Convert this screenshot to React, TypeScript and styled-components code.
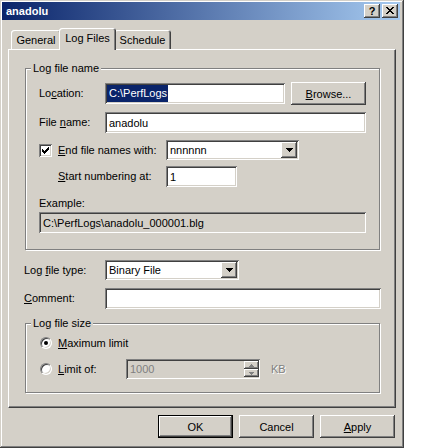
import React from 'react';
import styled, { createGlobalStyle, css } from 'styled-components';

const face = '#d4d0c8';

const GlobalStyle = createGlobalStyle`
  html, body {
    margin: 0;
    background: #fff;
  }
  body {
    font-family: "Liberation Sans", Arial, sans-serif;
    font-size: 11px;
    color: #000;
  }
`;

const raised = css`
  box-shadow: inset -1px -1px #404040, inset 1px 1px #fff, inset -2px -2px #808080, inset 2px 2px ${face};
`;

const sunken = css`
  box-shadow: inset 1px 1px #808080, inset -1px -1px #fff, inset 2px 2px #404040, inset -2px -2px ${face};
`;

const Window = styled.div`
  box-sizing: border-box;
  width: 404px;
  height: 448px;
  padding: 2px 4px 0 2px;
  background: ${face};
  box-shadow: inset -1px -1px #404040, inset 1px 1px ${face}, inset -2px -2px #808080, inset 2px 2px #fff;
`;

const TitleBar = styled.div`
  height: 18px;
  display: flex;
  align-items: center;
  padding: 0 2px 0 4px;
  background: linear-gradient(to right, #0a246a, #a6caf0);
`;

const Title = styled.span`
  flex: 1;
  color: #fff;
  font-weight: bold;
  font-size: 11px;
`;

const CaptionButton = styled.div<{ $gap?: number }>`
  box-sizing: border-box;
  width: 16px;
  height: 14px;
  margin-left: ${p => p.$gap ?? 0}px;
  background: ${face};
  ${raised};
  display: flex;
  align-items: center;
  justify-content: center;
  font-weight: bold;
  font-size: 11px;
  line-height: 14px;
  padding-bottom: 1px;
`;

const Body = styled.div`
  padding: 8px 4px 0 6px;
`;

const TabStrip = styled.div`
  display: flex;
  align-items: flex-end;
  height: 21px;
  padding-left: 3px;
`;

const Tab = styled.div<{ $active?: boolean; $w: number }>`
  position: relative;
  z-index: ${p => (p.$active ? 2 : 1)};
  box-sizing: border-box;
  width: ${p => p.$w}px;
  height: ${p => (p.$active ? 22 : 19)}px;
  margin: 0 ${p => (p.$active ? -2 : 0)}px ${p => (p.$active ? -1 : 0)}px;
  padding-bottom: ${p => (p.$active ? 2 : 0)}px;
  background: ${face};
  border-radius: 3px 3px 0 0;
  box-shadow: inset 1px 1px #fff, inset -1px 0 #404040, inset -2px 0 #808080;
  display: flex;
  align-items: center;
  justify-content: center;
`;

const Panel = styled.div`
  border: 1px solid;
  border-color: #fff #404040 #404040 #fff;
  box-shadow: inset -1px -1px #808080;
  padding: 18px 14px 14px 15px;
`;

const Group = styled.div<{ $mt?: number; $pb: number }>`
  margin: ${p => p.$mt ?? 0}px 1px 0;
  border: 1px solid #808080;
  box-shadow: 1px 1px #fff, inset 1px 1px #fff;
  padding: 0 13px ${p => p.$pb}px;
`;

const GroupTitle = styled.div`
  display: table;
  margin: -7px 0 0 -8px;
  padding: 0 2px;
  line-height: 13px;
  background: ${face};
`;

const Row = styled.div<{ $mt: number; $h: number; $indent?: number }>`
  display: flex;
  align-items: center;
  height: ${p => p.$h}px;
  margin-top: ${p => p.$mt}px;
  padding-left: ${p => p.$indent ?? 0}px;
`;

const Label = styled.span<{ $w?: number; $dim?: boolean; $ml?: number }>`
  flex: none;
  width: ${p => (p.$w ? `${p.$w}px` : 'auto')};
  margin-left: ${p => p.$ml ?? 0}px;
  white-space: nowrap;
  line-height: 13px;
  color: ${p => (p.$dim ? '#808080' : '#000')};
  text-shadow: ${p => (p.$dim ? '1px 1px #fff' : 'none')};
`;

const Key = styled.span`
  text-decoration: underline;
`;

const Edit = styled.div<{ $w?: number; $h?: number; $grey?: boolean }>`
  box-sizing: border-box;
  ${p => (p.$w ? `width: ${p.$w}px; flex: none;` : 'flex: 1;')}
  height: ${p => p.$h ?? 21}px;
  padding: 2px 2px 2px 4px;
  background: ${p => (p.$grey ? face : '#fff')};
  ${sunken};
  display: flex;
  align-items: center;
  white-space: nowrap;
  overflow: hidden;
`;

const EditText = styled.span<{ $dim?: boolean }>`
  flex: 1;
  color: ${p => (p.$dim ? '#808080' : '#000')};
`;

const Selected = styled.span`
  margin-left: -2px;
  padding: 0 1px 0 2px;
  line-height: 17px;
  background: #0a246a;
  color: #fff;
`;

const Combo = styled.div<{ $w: number }>`
  box-sizing: border-box;
  width: ${p => p.$w}px;
  height: 20px;
  padding: 2px;
  background: #fff;
  ${sunken};
  display: flex;
  align-items: center;
`;

const ComboText = styled.span`
  flex: 1;
  padding-left: 2px;
`;

const DropButton = styled.div`
  box-sizing: border-box;
  width: 16px;
  height: 16px;
  background: ${face};
  ${raised};
  display: flex;
  align-items: center;
  justify-content: center;
`;

const SpinColumn = styled.div`
  display: flex;
  flex-direction: column;
  width: 15px;
  height: 100%;
  margin-right: -1px;
`;

const SpinButton = styled.div`
  flex: 1;
  background: ${face};
  ${raised};
  display: flex;
  align-items: center;
  justify-content: center;
`;

const Button = styled.button<{ $w?: number; $ml?: number; $default?: boolean }>`
  box-sizing: border-box;
  width: ${p => p.$w ?? 75}px;
  height: 23px;
  margin-left: ${p => p.$ml ?? 0}px;
  padding: 0;
  border: none;
  background: ${face};
  font-family: inherit;
  font-size: 11px;
  color: #000;
  flex: none;
  ${p =>
    p.$default
      ? css`
          box-shadow: inset 0 0 0 1px #000, inset -2px -2px #404040, inset 2px 2px #fff, inset -3px -3px #808080;
        `
      : raised};
`;

const ButtonRow = styled.div`
  display: flex;
  justify-content: flex-end;
  gap: 6px;
  margin-top: 7px;
  padding-right: 1px;
`;

const CheckBox = styled.span`
  box-sizing: border-box;
  flex: none;
  width: 13px;
  height: 13px;
  margin-right: 6px;
  background: #fff;
  ${sunken};
  display: flex;
  align-items: center;
  justify-content: center;
`;

const Radio = styled.span<{ $checked?: boolean }>`
  box-sizing: border-box;
  flex: none;
  width: 12px;
  height: 12px;
  margin: 0 6px 0 1px;
  border-radius: 50%;
  border: 1px solid;
  border-color: #808080 #fff #fff #808080;
  background: #fff;
  box-shadow: inset 1px 1px #404040, inset -1px -1px ${face};
  display: flex;
  align-items: center;
  justify-content: center;
  &::after {
    content: '';
    display: ${p => (p.$checked ? 'block' : 'none')};
    width: 4px;
    height: 4px;
    border-radius: 50%;
    background: #000;
  }
`;

const DownArrow = () => (
  <svg width="7" height="4" viewBox="0 0 7 4">
    <path d="M0 0h7v1H0zM1 1h5v1H1zM2 2h3v1H2zM3 3h1v1H3z" fill="#000" />
  </svg>
);

const SmallArrow = ({ up }: { up?: boolean }) => (
  <svg width="5" height="3" viewBox="0 0 5 3" style={{ transform: up ? 'none' : 'scaleY(-1)' }}>
    <path d="M2 0h1v1H2zM1 1h3v1H1zM0 2h5v1H0z" fill="#808080" />
  </svg>
);

const CloseGlyph = () => (
  <svg width="8" height="7" viewBox="0 0 8 7">
    <path
      d="M0 0h2v1H0zM6 0h2v1H6zM1 1h2v1H1zM5 1h2v1H5zM2 2h4v1H2zM3 3h2v1H3zM2 4h4v1H2zM1 5h2v1H1zM5 5h2v1H5zM0 6h2v1H0zM6 6h2v1H6z"
      fill="#000"
    />
  </svg>
);

const CheckGlyph = () => (
  <svg width="7" height="7" viewBox="0 0 7 7">
    <path
      d="M6 0h1v1H6zM5 1h2v1H5zM0 2h1v1H0zM4 2h3v1H4zM0 3h2v1H0zM3 3h3v1H3zM0 4h5v1H0zM1 5h3v1H1zM2 6h1v1H2z"
      fill="#000"
    />
  </svg>
);

export default function App() {
  return (
    <>
      <GlobalStyle />
      <Window>
        <TitleBar>
          <Title>anadolu</Title>
          <CaptionButton>?</CaptionButton>
          <CaptionButton $gap={2}>
            <CloseGlyph />
          </CaptionButton>
        </TitleBar>

        <Body>
          <TabStrip>
            <Tab $w={50}>General</Tab>
            <Tab $w={57} $active>
              Log Files
            </Tab>
            <Tab $w={57}>Schedule</Tab>
          </TabStrip>

          <Panel>
            <Group $pb={16}>
              <GroupTitle>Log file name</GroupTitle>

              <Row $mt={7} $h={23}>
                <Label $w={66}>
                  Lo<Key>c</Key>ation:
                </Label>
                <Edit $w={180}>
                  <Selected>C:\PerfLogs</Selected>
                </Edit>
                <Button $ml={6}>
                  <Key>B</Key>rowse...
                </Button>
              </Row>

              <Row $mt={7} $h={21}>
                <Label $w={66}>
                  File <Key>n</Key>ame:
                </Label>
                <Edit>
                  <EditText>anadolu</EditText>
                </Edit>
              </Row>

              <Row $mt={7} $h={20}>
                <CheckBox>
                  <CheckGlyph />
                </CheckBox>
                <Label $w={108}>
                  <Key>E</Key>nd file names with:
                </Label>
                <Combo $w={133}>
                  <ComboText>nnnnnn</ComboText>
                  <DropButton>
                    <DownArrow />
                  </DropButton>
                </Combo>
              </Row>

              <Row $mt={6} $h={21} $indent={19}>
                <Label $w={108}>
                  <Key>S</Key>tart numbering at:
                </Label>
                <Edit $w={71}>
                  <EditText>1</EditText>
                </Edit>
              </Row>

              <Row $mt={10} $h={13}>
                <Label>Example:</Label>
              </Row>

              <Row $mt={2} $h={21}>
                <Edit $grey>
                  <EditText>C:\PerfLogs\anadolu_000001.blg</EditText>
                </Edit>
              </Row>
            </Group>

            <Row $mt={10} $h={20}>
              <Label $w={81}>
                Log <Key>f</Key>ile type:
              </Label>
              <Combo $w={134}>
                <ComboText>Binary File</ComboText>
                <DropButton>
                  <DownArrow />
                </DropButton>
              </Combo>
            </Row>

            <Row $mt={8} $h={21}>
              <Label $w={81}>
                <Key>C</Key>omment:
              </Label>
              <Edit />
            </Row>

            <Group $mt={14} $pb={13}>
              <GroupTitle>Log file size</GroupTitle>

              <Row $mt={5} $h={16}>
                <Radio $checked />
                <Label>
                  <Key>M</Key>aximum limit
                </Label>
              </Row>

              <Row $mt={8} $h={20}>
                <Radio />
                <Label $w={68}>
                  <Key>L</Key>imit of:
                </Label>
                <Edit $w={134} $h={20} $grey>
                  <EditText $dim>1000</EditText>
                  <SpinColumn>
                    <SpinButton>
                      <SmallArrow up />
                    </SpinButton>
                    <SpinButton>
                      <SmallArrow />
                    </SpinButton>
                  </SpinColumn>
                </Edit>
                <Label $dim $ml={11}>
                  KB
                </Label>
              </Row>
            </Group>
          </Panel>

          <ButtonRow>
            <Button $default>OK</Button>
            <Button>Cancel</Button>
            <Button>
              <Key>A</Key>pply
            </Button>
          </ButtonRow>
        </Body>
      </Window>
    </>
  );
}
